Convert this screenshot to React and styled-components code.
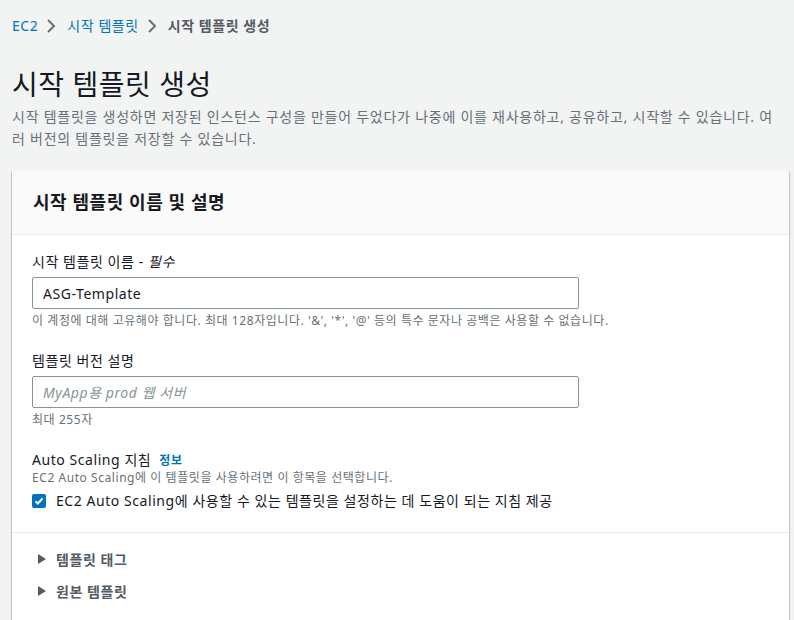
import React, { useState } from 'react';
import styled, { createGlobalStyle } from 'styled-components';

const GlobalStyle = createGlobalStyle`
    body {
        margin: 0;
        background-color: #f2f3f3;
        font-family: "Noto Sans", "Noto Sans CJK KR", sans-serif;
        letter-spacing: 0.035em;
        color: #16191f;
    }
`;

const Page = styled.div`
    padding: 16px 5px 0 12px;
`;

const Crumbs = styled.nav`
    display: flex;
    align-items: center;
    height: 20px;
    font-size: 14px;
    line-height: 20px;
`;

const Crumb = styled.a`
    color: ${p => (p.current ? '#545b64' : '#0073bb')};
    font-weight: ${p => (p.current ? 700 : 400)};
    text-decoration: none;
`;

const Sep = styled.svg`
    width: 16px;
    height: 16px;
    margin: 0 8px 0 5px;
`;

const Title = styled.h1`
    margin: 30px 0 0;
    font-size: 28px;
    line-height: 36px;
    font-weight: 400;
    color: #16191f;
`;

const Desc = styled.p`
    margin: 4px 0 0;
    padding-right: 10px;
    font-size: 14px;
    line-height: 22px;
    letter-spacing: 0.75px;
    color: #687078;
`;

const Card = styled.section`
    margin-top: 21px;
    background-color: #fff;
    box-shadow: 0 1px 1px 0 rgba(0, 28, 36, 0.3), 1px 1px 1px 0 rgba(0, 28, 36, 0.15),
        -1px 1px 1px 0 rgba(0, 28, 36, 0.15);
`;

const CardHead = styled.header`
    background-color: #fafafa;
    border-bottom: 1px solid #eaeded;
    padding: 19px 20px 20px 21px;
    h2 {
        margin: 0;
        font-size: 18px;
        line-height: 24px;
        font-weight: 700;
    }
`;

const CardBody = styled.div`
    padding: 17px 20px 21px;
    border-bottom: 1px solid #eaeded;
`;

const Field = styled.div`
    margin-bottom: ${p => p.gap ?? 22}px;
`;

const Label = styled.label`
    display: block;
    font-size: 14px;
    line-height: 20px;
    color: #16191f;
    i {
        font-style: italic;
    }
`;

const Info = styled.a`
    margin-left: 8px;
    font-size: 12px;
    font-weight: 700;
    color: #0073bb;
    text-decoration: none;
`;

const Input = styled.input`
    display: block;
    box-sizing: border-box;
    width: 547px;
    height: 32px;
    margin-top: 5px;
    padding: 0 10px;
    border: 1px solid #879596;
    border-radius: 2px;
    font-family: inherit;
    font-size: 14px;
    letter-spacing: inherit;
    color: #16191f;
    &::placeholder {
        color: #879596;
        font-style: italic;
    }
`;

const Hint = styled.div`
    margin-top: ${p => p.top ?? 4}px;
    font-size: 12px;
    line-height: 16px;
    color: #687078;
`;

const CheckRow = styled.label`
    display: flex;
    align-items: center;
    margin-top: 5px;
    font-size: 14px;
    line-height: 20px;
    cursor: pointer;
`;

const Box = styled.span`
    display: inline-flex;
    align-items: center;
    justify-content: center;
    width: 14px;
    height: 14px;
    margin-right: 10px;
    border-radius: 2px;
    background-color: ${p => (p.on ? '#0073bb' : '#fff')};
    border: ${p => (p.on ? 'none' : '2px solid #aab7b8')};
`;

const Expanders = styled.div`
    padding: 16px 20px 18px 26px;
`;

const Expander = styled.div`
    display: flex;
    align-items: center;
    height: 20px;
    margin-bottom: 12px;
    font-size: 14px;
    font-weight: 700;
    color: #545b64;
    svg {
        margin-right: 10px;
    }
`;

const Chevron = () => (
    <Sep viewBox="0 0 16 16">
        <path d="M5 2l6 6-6 6" fill="none" stroke="#687078" strokeWidth="2" />
    </Sep>
);

const Caret = () => (
    <svg width="8" height="10" viewBox="0 0 8 10">
        <path d="M0 0l8 5-8 5z" fill="#545b64" />
    </svg>
);

const App = () => {
    const [guide, setGuide] = useState(true);

    return (
        <Page>
            <GlobalStyle />
            <Crumbs>
                <Crumb href="#">EC2</Crumb>
                <Chevron />
                <Crumb href="#">시작 템플릿</Crumb>
                <Chevron />
                <Crumb current>시작 템플릿 생성</Crumb>
            </Crumbs>

            <Title>시작 템플릿 생성</Title>
            <Desc>
                시작 템플릿을 생성하면 저장된 인스턴스 구성을 만들어 두었다가 나중에 이를 재사용하고, 공유하고, 시작할 수 있습니다. 여러 버전의 템플릿을 저장할 수 있습니다.
            </Desc>

            <Card>
                <CardHead>
                    <h2>시작 템플릿 이름 및 설명</h2>
                </CardHead>
                <CardBody>
                    <Field>
                        <Label htmlFor="ltname">시작 템플릿 이름 - <i>필수</i></Label>
                        <Input id="ltname" defaultValue="ASG-Template" />
                        <Hint>이 계정에 대해 고유해야 합니다. 최대 128자입니다. '&amp;', '*', '@' 등의 특수 문자나 공백은 사용할 수 없습니다.</Hint>
                    </Field>
                    <Field>
                        <Label htmlFor="ltdesc">템플릿 버전 설명</Label>
                        <Input id="ltdesc" placeholder="MyApp용 prod 웹 서버" />
                        <Hint>최대 255자</Hint>
                    </Field>
                    <Field gap={0}>
                        <Label>
                            Auto Scaling 지침
                            <Info href="#">정보</Info>
                        </Label>
                        <Hint top={-1}>EC2 Auto Scaling에 이 템플릿을 사용하려면 이 항목을 선택합니다.</Hint>
                        <CheckRow onClick={() => setGuide(!guide)}>
                            <Box on={guide}>
                                {guide && (
                                    <svg width="10" height="10" viewBox="0 0 10 10">
                                        <path d="M1.5 5.2l2.3 2.3 4.7-5" fill="none" stroke="#fff" strokeWidth="2" />
                                    </svg>
                                )}
                            </Box>
                            EC2 Auto Scaling에 사용할 수 있는 템플릿을 설정하는 데 도움이 되는 지침 제공
                        </CheckRow>
                    </Field>
                </CardBody>
                <Expanders>
                    <Expander>
                        <Caret />
                        템플릿 태그
                    </Expander>
                    <Expander>
                        <Caret />
                        원본 템플릿
                    </Expander>
                </Expanders>
            </Card>
        </Page>
    );
};

export default App;
